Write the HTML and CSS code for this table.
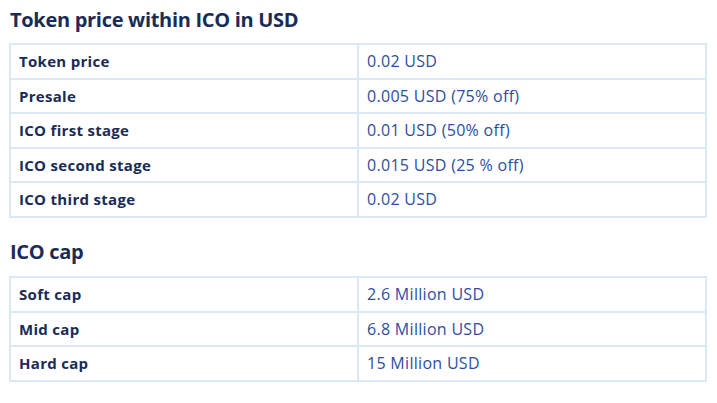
FILE: index.html
```html
<!DOCTYPE html>
<html>
<head>
<meta charset="utf-8">
<link rel="stylesheet" href="styles.css">
</head>
<body>
<section class="block">
  <h2 class="title">Token price within ICO in USD</h2>
  <table class="info">
    <colgroup><col class="label-col"><col></colgroup>
    <tr><th>Token price</th><td>0.02 USD</td></tr>
    <tr><th>Presale</th><td>0.005 USD (75% off)</td></tr>
    <tr><th>ICO first stage</th><td>0.01 USD (50% off)</td></tr>
    <tr><th>ICO second stage</th><td>0.015 USD (25 % off)</td></tr>
    <tr><th>ICO third stage</th><td>0.02 USD</td></tr>
  </table>
</section>
<section class="block">
  <h2 class="title">ICO cap</h2>
  <table class="info">
    <colgroup><col class="label-col"><col></colgroup>
    <tr><th>Soft cap</th><td>2.6 Million USD</td></tr>
    <tr><th>Mid cap</th><td>6.8 Million USD</td></tr>
    <tr><th>Hard cap</th><td>15 Million USD</td></tr>
  </table>
</section>
</body>
</html>
```

FILE: styles.css
```css
html, body {
  margin: 0;
  background: #ffffff;
}
body {
  padding: 5px 10px 0 9px;
  font-family: "Open Sans", Lato, sans-serif;
}
.block {
  display: flex;
  flex-direction: column;
}
.title {
  margin: 0 0 9px 1px;
  font-size: 20px;
  line-height: 29px;
  font-weight: 700;
  color: #1a2b57;
  letter-spacing: -0.3px;
}
.block + .block .title {
  margin-top: 19px;
  margin-bottom: 10px;
}
.info {
  width: 698px;
  border-collapse: collapse;
  border: 2px solid #dbe9f6;
  table-layout: fixed;
}
.label-col {
  width: 348px;
}
.info th, .info td {
  border: 2px solid #dbe9f6;
  padding: 5px 8px;
  line-height: 22.6px;
  font-size: 15px;
  text-align: left;
}
.info th {
  font-weight: 700;
  letter-spacing: 0.3px;
  color: #1a2b57;
}
.info td {
  font-weight: 400;
  font-size: 16px;
  letter-spacing: 0.3px;
  color: #2d4ea0;
}
```
